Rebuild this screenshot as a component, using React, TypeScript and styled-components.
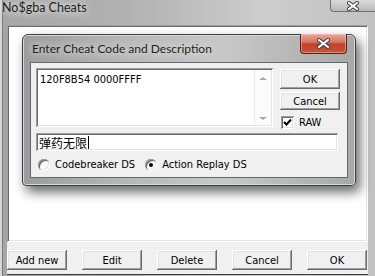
import React from "react";
import styled, { createGlobalStyle } from "styled-components";

const UI = `"DejaVu Sans Condensed", "Liberation Sans", sans-serif`;
const TITLE = `Lato, "Open Sans", "Noto Sans", sans-serif`;
const CJK = `"Noto Sans CJK SC", sans-serif`;

const Global = createGlobalStyle`
  html, body { margin: 0; padding: 0; }
  body { width: 375px; height: 276px; overflow: hidden; background: #c4c4c4; }
`;

const raised = `
  background: #f0f0f0;
  box-shadow: inset -1px -1px #696969, inset 1px 1px #ffffff,
    inset -2px -2px #a0a0a0, inset 2px 2px #e3e3e3;
`;

const sunken = `
  background: #ffffff;
  box-shadow: inset 1px 1px #a0a0a0, inset -1px -1px #ffffff,
    inset 2px 2px #696969, inset -2px -2px #e3e3e3;
`;

const Window = styled.div`
  position: relative;
  width: 375px;
  height: 276px;
  box-sizing: border-box;
  padding: 0 7px 2px 7px;
  display: flex;
  flex-direction: column;
  background: linear-gradient(90deg, #a6a6a6 0%, #b2b2b2 35%, #cdcdcd 70%, #c2c2c2 100%);
  box-shadow: inset 2px 0 #d6d6d6, inset 3px 0 #7a7a7a;
`;

const TitleBar = styled.div`
  height: 25px;
  margin: 0 -7px;
  display: flex;
  align-items: flex-start;
`;

const TitleText = styled.div`
  font-family: ${TITLE};
  font-size: 12.5px;
  line-height: 15px;
  color: #1e1e1e;
  padding: 0 0 0 2px;
  text-shadow: 0 0 6px #e8e8e8, 0 0 10px #e8e8e8;
`;

const OuterClose = styled.div`
  margin-left: auto;
  width: 45px;
  height: 12px;
  box-sizing: border-box;
  border: 1px solid #707070;
  border-top: none;
  border-right: none;
  border-radius: 0 0 0 4px;
  background: linear-gradient(#dadada, #b9b9b9);
  display: flex;
  align-items: center;
  justify-content: center;
`;

const Client = styled.div`
  flex: 1;
  display: flex;
  flex-direction: column;
  background: #f0f0f0;
  box-shadow: 0 1px 0 #3c3c3c;
`;

const ListBox = styled.div`
  flex: 1;
  ${sunken}
`;

const ButtonRow = styled.div`
  display: flex;
  gap: 15px;
  padding: 8px 0 4px 0;
`;

const Button = styled.div<{ $h?: number }>`
  width: 60px;
  height: ${(p) => p.$h ?? 20}px;
  ${raised}
  display: flex;
  align-items: center;
  justify-content: center;
  font-family: ${UI};
  font-size: 11px;
  color: #000;
  padding-top: 1px;
  box-sizing: border-box;
`;

const Dialog = styled.div`
  position: absolute;
  left: 22px;
  top: 34px;
  width: 334px;
  height: 152px;
  box-sizing: border-box;
  border: 1px solid #33434b;
  border-radius: 6px 6px 4px 4px;
  background: linear-gradient(90deg, #9c9c9c 0%, #b6b6b6 30%, #c8c8c8 60%, #a8a8a8 100%);
  box-shadow: 4px 6px 12px rgba(0, 0, 0, 0.6), inset 0 0 0 1px #d8d8d8;
  display: flex;
  flex-direction: column;
`;

const DialogTitleBar = styled.div`
  height: 27px;
  display: flex;
  align-items: flex-start;
`;

const DialogTitle = styled.div`
  font-family: ${TITLE};
  font-size: 12px;
  line-height: 16px;
  color: #1e1e1e;
  padding: 6px 0 0 9px;
  text-shadow: 0 0 6px #e0e0e0, 0 0 10px #e0e0e0;
`;

const RedClose = styled.div`
  margin-left: auto;
  margin-right: 8px;
  margin-top: -1px;
  width: 47px;
  height: 20px;
  box-sizing: border-box;
  border: 1px solid #5a1f16;
  border-top: none;
  border-radius: 0 0 4px 4px;
  background: linear-gradient(#e9a89a 0%, #d77a66 40%, #c0402a 55%, #c8553c 100%);
  box-shadow: inset 0 0 0 1px rgba(255, 200, 190, 0.5);
  display: flex;
  align-items: center;
  justify-content: center;
`;

const DialogClient = styled.div`
  margin: 0 7px 7px 7px;
  flex: 1;
  box-sizing: border-box;
  border: 1px solid #5b6b73;
  background: #f0f0f0;
  padding: 5px 0 0 5px;
  display: flex;
  flex-direction: column;
`;

const TopRow = styled.div`
  display: flex;
  gap: 7px;
  align-items: flex-start;
`;

const CodeBox = styled.div`
  width: 237px;
  height: 59px;
  box-sizing: border-box;
  ${sunken}
  display: flex;
  padding: 2px;
`;

const CodeText = styled.div`
  flex: 1;
  font-family: ${UI};
  font-size: 11px;
  line-height: 15px;
  padding: 2px 0 0 2px;
  color: #000;
`;

const ScrollBar = styled.div`
  width: 16px;
  display: flex;
  flex-direction: column;
  justify-content: space-between;
  align-items: center;
  background: #fbfbfb;
  border-left: 1px solid #ececec;
  padding: 7px 0 5px;
`;

const Arrow = styled.div<{ $down?: boolean }>`
  width: 0;
  height: 0;
  border-left: 4px solid transparent;
  border-right: 4px solid transparent;
  ${(p) =>
    p.$down
      ? "border-top: 3px solid #a8a8a8;"
      : "border-bottom: 3px solid #a8a8a8;"}
`;

const SideCol = styled.div`
  width: 60px;
  padding-top: 1px;
  display: flex;
  flex-direction: column;
  gap: 3px;
`;

const CheckRow = styled.div`
  margin-top: 3px;
  display: flex;
  align-items: center;
  gap: 5px;
  height: 12px;
  padding-left: 1px;
  font-family: ${UI};
  font-size: 11px;
  color: #000;
`;

const CheckBox = styled.div`
  width: 13px;
  height: 13px;
  box-sizing: border-box;
  ${sunken}
  display: flex;
  align-items: center;
  justify-content: center;
`;

const Field = styled.div`
  margin-top: 5px;
  width: 302px;
  height: 18px;
  box-sizing: border-box;
  ${sunken}
  display: flex;
  align-items: center;
  padding-left: 3px;
  font-family: ${CJK};
  font-size: 12px;
  color: #000;
`;

const Caret = styled.span`
  display: inline-block;
  width: 1px;
  height: 13px;
  background: #000;
  margin-left: 1px;
`;

const RadioRow = styled.div`
  margin-top: 7px;
  display: flex;
  align-items: center;
  padding-left: 2px;
  gap: 10px;
  font-family: ${UI};
  font-size: 11px;
  color: #000;
`;

const RadioItem = styled.div`
  display: flex;
  align-items: center;
  gap: 5px;
`;

const Radio = styled.div<{ $on?: boolean }>`
  width: 12px;
  height: 12px;
  border-radius: 50%;
  box-sizing: border-box;
  ${sunken}
  display: flex;
  align-items: center;
  justify-content: center;
  &::after {
    content: "";
    width: 4px;
    height: 4px;
    border-radius: 50%;
    background: ${(p) => (p.$on ? "#000" : "transparent")};
  }
`;

const CloseX = ({ w = 10, h = 8 }: { w?: number; h?: number }) => (
  <svg width={w + 4} height={h + 4} viewBox={`0 0 ${w + 4} ${h + 4}`}>
    <g strokeLinecap="square">
      <path d={`M2 2 L${w + 2} ${h + 2} M${w + 2} 2 L2 ${h + 2}`} stroke="#3a3a3a" strokeWidth="4" />
      <path d={`M2 2 L${w + 2} ${h + 2} M${w + 2} 2 L2 ${h + 2}`} stroke="#ffffff" strokeWidth="2" />
    </g>
  </svg>
);

const Check = () => (
  <svg width="9" height="9" viewBox="0 0 9 9">
    <path d="M1 4 L3.5 6.5 L8 1.5" stroke="#000" strokeWidth="2" fill="none" />
  </svg>
);

export default function App() {
  return (
    <>
      <Global />
      <Window>
        <TitleBar>
          <TitleText>No$gba Cheats</TitleText>
          <OuterClose>
            <CloseX w={8} h={6} />
          </OuterClose>
        </TitleBar>
        <Client>
          <ListBox />
          <ButtonRow>
            <Button>Add new</Button>
            <Button>Edit</Button>
            <Button>Delete</Button>
            <Button>Cancel</Button>
            <Button>OK</Button>
          </ButtonRow>
        </Client>

        <Dialog>
          <DialogTitleBar>
            <DialogTitle>Enter Cheat Code and Description</DialogTitle>
            <RedClose>
              <CloseX w={9} h={7} />
            </RedClose>
          </DialogTitleBar>
          <DialogClient>
            <TopRow>
              <CodeBox>
                <CodeText>120F8B54 0000FFFF</CodeText>
                <ScrollBar>
                  <Arrow />
                  <Arrow $down />
                </ScrollBar>
              </CodeBox>
              <SideCol>
                <Button $h={20}>OK</Button>
                <Button $h={18}>Cancel</Button>
                <CheckRow>
                  <CheckBox>
                    <Check />
                  </CheckBox>
                  RAW
                </CheckRow>
              </SideCol>
            </TopRow>
            <Field>
              弹药无限
              <Caret />
            </Field>
            <RadioRow>
              <RadioItem>
                <Radio />
                Codebreaker DS
              </RadioItem>
              <RadioItem>
                <Radio $on />
                Action Replay DS
              </RadioItem>
            </RadioRow>
          </DialogClient>
        </Dialog>
      </Window>
    </>
  );
}
